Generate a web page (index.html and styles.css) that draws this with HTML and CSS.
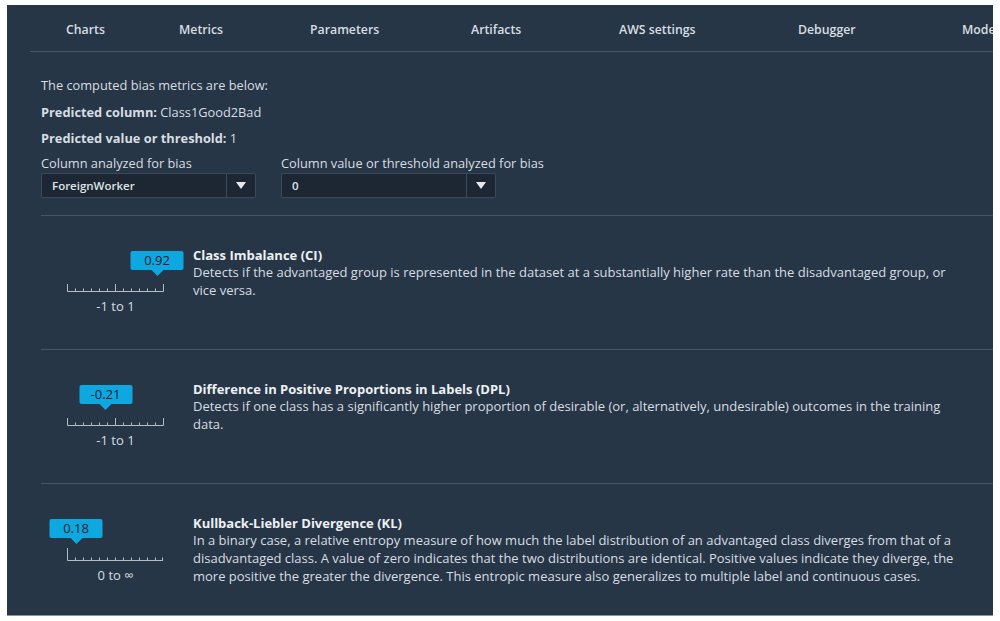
FILE: index.html
```html
<!DOCTYPE html>
<html>
<head>
  <meta charset="UTF-8">
  <title>Bias report</title>
  <link rel="stylesheet" href="styles.css">
</head>
<body>

<div class="panel">
  <nav class="tabs">
    <span class="tab">Charts</span>
    <span class="tab">Metrics</span>
    <span class="tab">Parameters</span>
    <span class="tab">Artifacts</span>
    <span class="tab">AWS settings</span>
    <span class="tab">Debugger</span>
    <span class="tab">Model</span>
  </nav>

  <div class="summary">
    <p class="line">The computed bias metrics are below:</p>
    <p class="line"><b>Predicted column:</b> Class1Good2Bad</p>
    <p class="line"><b>Predicted value or threshold:</b> 1</p>
    <div class="filters">
      <div class="field">
        <div class="field-label">Column analyzed for bias</div>
        <div class="select">
          <span class="select-value">ForeignWorker</span>
          <span class="select-arrow"></span>
        </div>
      </div>
      <div class="field">
        <div class="field-label">Column value or threshold analyzed for bias</div>
        <div class="select">
          <span class="select-value">0</span>
          <span class="select-arrow"></span>
        </div>
      </div>
    </div>
  </div>

  <div class="metric">
    <div class="gauge">
      <div class="gauge-tip">
        <span class="tip" style="left:90px">0.92</span>
      </div>
      <svg class="ticks" width="97" height="8" viewBox="0 0 97 8">
        <path d="M0.5 0V7.5H96.5V0 M48.5 0V7.5 M8.5 4.5V7.5 M16.5 4.5V7.5 M24.5 4.5V7.5 M32.5 4.5V7.5 M40.5 4.5V7.5 M56.5 4.5V7.5 M64.5 4.5V7.5 M72.5 4.5V7.5 M80.5 4.5V7.5 M88.5 4.5V7.5"/>
      </svg>
      <div class="gauge-range">-1 to 1</div>
    </div>
    <div class="metric-text">
      <div class="metric-title">Class Imbalance (CI)</div>
      <p>Detects if the advantaged group is represented in the dataset at a substantially higher rate than the disadvantaged group, or vice versa.</p>
    </div>
  </div>

  <div class="metric">
    <div class="gauge">
      <div class="gauge-tip">
        <span class="tip" style="left:38.5px">-0.21</span>
      </div>
      <svg class="ticks" width="97" height="8" viewBox="0 0 97 8">
        <path d="M0.5 0V7.5H96.5V0 M48.5 0V7.5 M8.5 4.5V7.5 M16.5 4.5V7.5 M24.5 4.5V7.5 M32.5 4.5V7.5 M40.5 4.5V7.5 M56.5 4.5V7.5 M64.5 4.5V7.5 M72.5 4.5V7.5 M80.5 4.5V7.5 M88.5 4.5V7.5"/>
      </svg>
      <div class="gauge-range">-1 to 1</div>
    </div>
    <div class="metric-text">
      <div class="metric-title">Difference in Positive Proportions in Labels (DPL)</div>
      <p>Detects if one class has a significantly higher proportion of desirable (or, alternatively, undesirable) outcomes in the training data.</p>
    </div>
  </div>

  <div class="metric last">
    <div class="gauge">
      <div class="gauge-tip">
        <span class="tip" style="left:9px">0.18</span>
      </div>
      <svg class="ticks open" width="97" height="13" viewBox="0 0 97 13">
        <path d="M0.5 0V12.5H96 M8.5 9.5V12.5 M16.5 9.5V12.5 M24.5 9.5V12.5 M32.5 9.5V12.5 M40.5 9.5V12.5 M48.5 9.5V12.5 M56.5 9.5V12.5 M64.5 9.5V12.5 M72.5 9.5V12.5 M80.5 9.5V12.5 M88.5 9.5V12.5 M95.5 9.5V12.5"/>
      </svg>
      <div class="gauge-range">0 to &infin;</div>
    </div>
    <div class="metric-text">
      <div class="metric-title">Kullback-Liebler Divergence (KL)</div>
      <p>In a binary case, a relative entropy measure of how much the label distribution of an advantaged class diverges from that of a disadvantaged class. A value of zero indicates that the two distributions are identical. Positive values indicate they diverge, the more positive the greater the divergence. This entropic measure also generalizes to multiple label and continuous cases.</p>
    </div>
  </div>
</div>

</body>
</html>
```

FILE: styles.css
```css
html, body {
  margin: 0;
  padding: 0;
  background: #fff;
}

body {
  font-family: "Open Sans", "Noto Sans", sans-serif;
  font-size: 12.8px;
  color: #d8dde1;
}

.panel {
  margin: 5px 7px 0 7px;
  height: 611px;
  background: #263647;
  overflow: hidden;
  border-bottom: 1px solid #8a949e;
  box-sizing: border-box;
}

/* tab strip */
.tabs {
  display: flex;
  margin-left: 23px;
  height: 47px;
  box-sizing: border-box;
  padding-top: 16px;
  border-bottom: 1px solid #475566;
  white-space: nowrap;
}
.tab {
  font-weight: 600;
  font-size: 12.3px;
  line-height: 18px;
  color: #d9dee2;
  flex: none;
}
.tab:nth-child(1) { margin-left: 36px; width: 113px; }
.tab:nth-child(2) { width: 131px; }
.tab:nth-child(3) { width: 161px; }
.tab:nth-child(4) { width: 148px; }
.tab:nth-child(5) { width: 179px; }
.tab:nth-child(6) { width: 164px; }

/* report header */
.summary {
  margin-left: 34px;
  padding: 20px 0 17px 0;
  border-bottom: 1px solid #475566;
}
.line {
  margin: 0;
  line-height: 26.5px;
}
.line b {
  font-weight: 700;
}
.filters {
  display: flex;
  gap: 25px;
  margin-top: 1px;
}
.field {
  width: 215px;
}
.field-label {
  line-height: 20px;
  white-space: nowrap;
}
.select {
  display: flex;
  height: 25px;
  box-sizing: border-box;
  background: #1c2733;
  border: 1px solid #3c4a59;
  border-radius: 2px;
}
.select-value {
  flex: 1;
  padding-left: 10px;
  line-height: 23px;
  font-size: 11.5px;
  font-weight: 600;
  color: #dfe3e6;
}
.select-arrow {
  width: 28px;
  border-left: 1px solid #3c4a59;
  position: relative;
}
.select-arrow::after {
  content: "";
  position: absolute;
  left: 9px;
  top: 8px;
  border-left: 5px solid transparent;
  border-right: 5px solid transparent;
  border-top: 7px solid #e6e9ec;
}

/* metric rows */
.metric {
  display: flex;
  margin-left: 34px;
  height: 134px;
  box-sizing: border-box;
  padding-top: 31px;
  border-bottom: 1px solid #475566;
}
.metric.last {
  border-bottom: none;
}

.gauge {
  width: 152px;
  flex: none;
  padding-top: 4px;
  padding-left: 26px;
  box-sizing: border-box;
}
.gauge-tip {
  position: relative;
  height: 25px;
  width: 97px;
}
.tip {
  position: absolute;
  top: 0;
  transform: translateX(-50%);
  width: 53px;
  height: 19px;
  line-height: 19px;
  text-align: center;
  background: #0fa7e0;
  color: #14212e;
  border-radius: 2px;
  font-size: 13px;
}
.tip::after {
  content: "";
  position: absolute;
  left: 50%;
  bottom: -6px;
  margin-left: -6px;
  border-left: 6px solid transparent;
  border-right: 6px solid transparent;
  border-top: 6px solid #0fa7e0;
}
.ticks {
  display: block;
  margin-top: 8px;
  fill: none;
  stroke: #b4bdc6;
  stroke-width: 1;
}
.ticks.open {
  margin-top: 4px;
}
.gauge-range {
  width: 97px;
  text-align: center;
  margin-top: 6px;
  line-height: 16px;
  font-size: 13px;
}

.metric-text {
  width: 766px;
  font-size: 13px;
  line-height: 17.7px;
}
.metric-title {
  font-weight: 700;
  color: #eef0f2;
}
.metric-text p {
  margin: 0;
}
```
